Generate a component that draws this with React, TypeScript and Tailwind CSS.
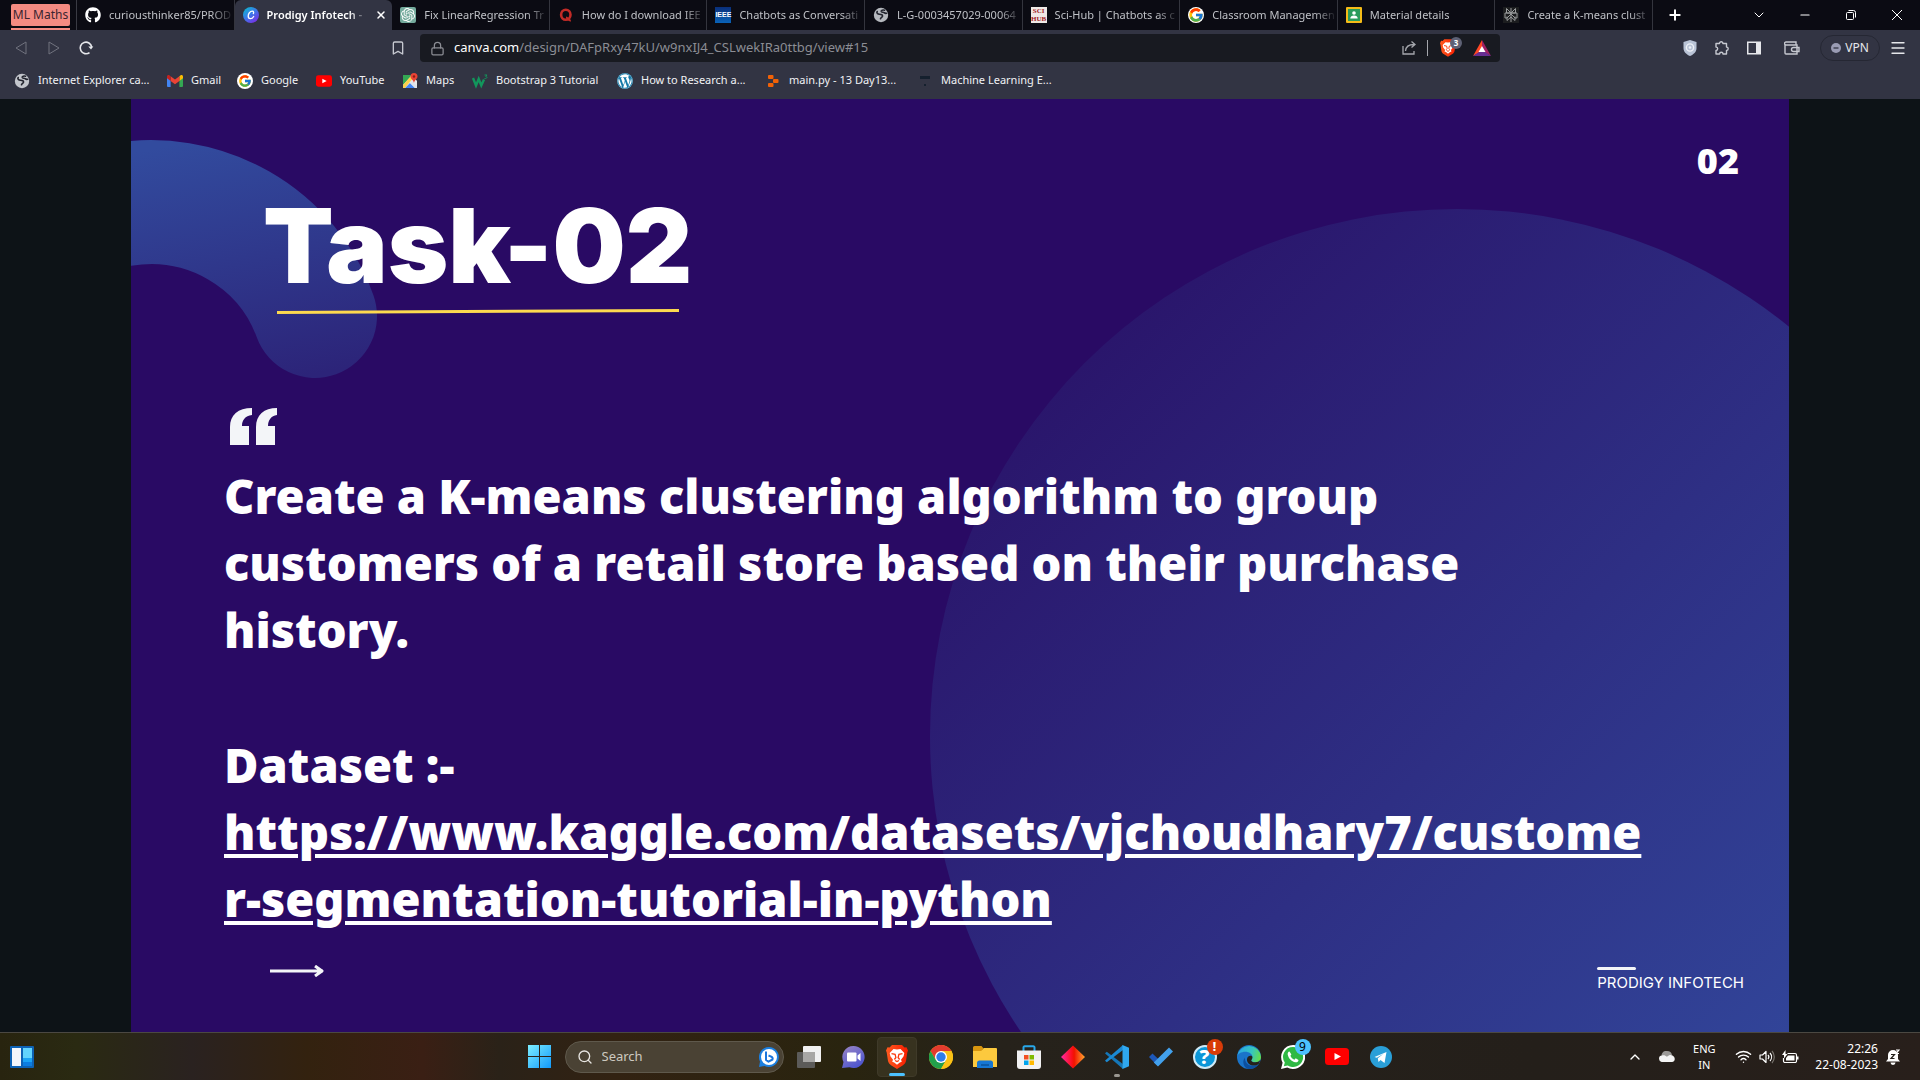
import React from "react";
import {
  Bookmark,
  ChevronDown,
  ChevronUp,
  Lock,
  Menu,
  Minus,
  Plus,
  Search,
  Wifi,
  X,
} from "lucide-react";
import { FaGithub, FaWordpress } from "react-icons/fa";
import { FcGoogle } from "react-icons/fc";
import { SiOpenai } from "react-icons/si";

/* ---------- favicons ---------- */

function CanvaIcon() {
  return (
    <svg viewBox="0 0 16 16" className="size-4">
      <defs>
        <linearGradient id="canva" x1="0" y1="0" x2="0.8" y2="1">
          <stop offset="0" stopColor="#05c3cc" />
          <stop offset="0.5" stopColor="#3a7be8" />
          <stop offset="1" stopColor="#7d2ae8" />
        </linearGradient>
      </defs>
      <circle cx="8" cy="8" r="8" fill="url(#canva)" />
      <path
        d="M10.3 6.6c.6-.8.5-2.5-1-2.5C7 4.1 5.2 6.8 5.2 9.1c0 1.6.9 2.6 2.2 2.6 1.4 0 2.6-1 3.3-2.2"
        fill="none"
        stroke="#fff"
        strokeWidth="1.3"
        strokeLinecap="round"
      />
    </svg>
  );
}

function OpenAiIcon() {
  return (
    <span className="flex size-4 items-center justify-center rounded-xs bg-[#74aa9c]">
      <SiOpenai className="size-[14px] text-white" />
    </span>
  );
}

function QuoraIcon() {
  return (
    <svg viewBox="0 0 16 16" className="size-4">
      <ellipse cx="7.8" cy="7.8" rx="4.7" ry="5" fill="none" stroke="#c22b27" strokeWidth="2.6" />
      <path d="M8 10.500c2 0 2.400 3.500 4.800 3" fill="none" stroke="#c22b27" strokeWidth="2" />
    </svg>
  );
}

function IeeeIcon() {
  return (
    <span className="flex size-4 items-center justify-center bg-linear-to-b from-[#0a2f7a] to-[#0a63b8] font-['Liberation_Sans',sans-serif] text-[7px] font-bold text-white">
      IEEE
    </span>
  );
}

function GlobeIcon({ color = "#b5b8be" }: { color?: string }) {
  return (
    <svg viewBox="0 0 16 16" className="size-4">
      <circle cx="8" cy="8" r="7.2" fill={color} />
      <path
        d="M4.200 4.500c-1 1.500.5 2.600 2.300 2.700 2 .1 3.300.6 3 2-.3 1.200-1.700 1.300-2 2.600M11.500 3.200C10 2.800 8 3.200 8.200 4.400c.2 1 2 .6 3 1.300.6.5 1.300.8 2.300.6"
        fill="none"
        stroke="#22242e"
        strokeWidth="1.6"
        strokeLinecap="round"
      />
    </svg>
  );
}

function SciHubIcon() {
  return (
    <span className="flex size-4 flex-col items-center justify-center bg-[#efe9e6] font-['Liberation_Serif',serif] text-[7px] leading-[8px] font-bold text-[#a3231f]">
      <span>SCI</span>
      <span>HUB</span>
    </span>
  );
}

function ClassroomIcon() {
  return (
    <svg viewBox="0 0 16 16" className="size-4">
      <rect width="16" height="16" rx="1" fill="#f5bb18" />
      <rect x="2" y="2" width="12" height="12" fill="#2a9b5b" />
      <circle cx="8" cy="6" r="1.8" fill="#fff" />
      <path d="M4.3 11.5c0-2 1.500-3 3.700-3s3.700 1 3.700 3z" fill="#fff" />
    </svg>
  );
}

function KnotIcon() {
  return (
    <svg viewBox="0 0 16 16" className="size-4">
      <rect width="16" height="16" fill="#1c1d1f" />
      <path
        d="M8 1v14M3.500 1.500 8 6l4.500-4.500V6h-9zM2 6h12v5h-2L8 7l-4 4H2zM4 9.500v4L8 10l4 3.500v-4"
        fill="none"
        stroke="#9a9c9d"
        strokeWidth="1"
      />
    </svg>
  );
}

function YouTubeIcon({ className }: { className: string }) {
  return (
    <svg viewBox="0 0 24 17" className={className}>
      <rect width="24" height="17" rx="3.5" fill="#f00" />
      <path d="M9.500 5v7l6.500-3.500z" fill="#fff" />
    </svg>
  );
}

function GmailIcon() {
  return (
    <svg viewBox="0 0 16 12" className="h-3 w-4">
      <path d="M0 1.500V11a1 1 0 0 0 1 1h2.600V5z" fill="#4285f4" />
      <path d="M16 1.500V11a1 1 0 0 1-1 1h-2.600V5z" fill="#34a853" />
      <path d="M12.400 1.200V6L16 3.300V1.600C16 .2 14.500-.4 13.400.4z" fill="#fbbc04" />
      <path d="M3.600 6V1.200L8 4.500l4.400-3.300V6L8 9.300z" fill="#ea4335" />
      <path d="M0 1.600v1.700L3.600 6V1.200l-1-.8C1.500-.4 0 .2 0 1.600z" fill="#c5221f" />
    </svg>
  );
}

function MapsIcon() {
  return (
    <svg viewBox="0 0 16 16" className="size-4">
      <path d="M1 2h9l5 6v7H1z" fill="#e8eaed" />
      <path d="M1 2h9L1 12z" fill="#34a853" />
      <path d="M3 15l5-5 5 5z" fill="#4285f4" />
      <path d="M1 15v-3l9-10 2 2L3 15z" fill="#fbd04b" />
      <path d="M8 10l2-2 5 5v2h-2z" fill="#dfe3ea" />
      <path d="M12 0a3.500 3.500 0 0 0-3.500 3.500C8.500 6 11.500 7 12 10c.5-3 3.500-4 3.500-6.500A3.500 3.500 0 0 0 12 0z" fill="#ea4335" />
      <circle cx="12" cy="3.5" r="1.2" fill="#8c1d14" />
    </svg>
  );
}

function W3Icon() {
  return (
    <svg viewBox="0 0 16 16" className="size-4">
      <path d="M1 5l3 7.500L6.700 6l2.600 6.500L12 6.500" fill="none" stroke="#12965c" strokeWidth="2.4" />
      <path d="M12.500 2h2.500l-1.300 1.500c1.800 0 1.800 2.300-1.200 2" fill="none" stroke="#12965c" strokeWidth="1" />
    </svg>
  );
}

function ReplitIcon() {
  return (
    <svg viewBox="0 0 16 16" className="size-4">
      <rect x="3" y="2" width="5.5" height="4" rx="1" fill="#f26207" />
      <rect x="8" y="6" width="5.5" height="4" rx="1" fill="#f26207" />
      <rect x="3" y="10" width="5.5" height="4" rx="1" fill="#f26207" />
    </svg>
  );
}

function DashIcon() {
  return (
    <svg viewBox="0 0 16 16" className="size-4">
      <rect x="3" y="3" width="10" height="3" fill="#15202e" />
      <rect x="7" y="11" width="2" height="2" fill="#15202e" />
    </svg>
  );
}

/* ---------- browser chrome ---------- */

type Tab = { title: string; icon: React.ReactNode; active?: boolean };

const tabs: Tab[] = [
  { title: "curiousthinker85/PROD", icon: <FaGithub className="size-4 text-white" /> },
  { title: "Prodigy Infotech -", icon: <CanvaIcon />, active: true },
  { title: "Fix LinearRegression Tr", icon: <OpenAiIcon /> },
  { title: "How do I download IEE", icon: <QuoraIcon /> },
  { title: "Chatbots as Conversati", icon: <IeeeIcon /> },
  { title: "L-G-0003457029-00064", icon: <GlobeIcon /> },
  { title: "Sci-Hub | Chatbots as c", icon: <SciHubIcon /> },
  { title: "Classroom Managemen", icon: <FcGoogle className="size-4 rounded-full bg-white" /> },
  { title: "Material details", icon: <ClassroomIcon /> },
  { title: "Create a K-means clust", icon: <KnotIcon /> },
];

function TabStrip() {
  return (
    <div className="flex h-[30px] items-stretch bg-[#0b0b13]">
      <div className="flex w-[77px] shrink-0 flex-col border-r border-[#3a3b44] pl-[11px]">
        <button className="mt-1 h-[22px] w-[59px] rounded-xs bg-[#f48b82] text-[12px] leading-[22px] text-[#3a2530]">
          ML Maths
        </button>
        <span className="mt-[2px] h-[2px] w-[59px] bg-[#f48b82]" />
      </div>
      <div className="grid w-[1576px] min-w-0 grid-cols-10">
        {tabs.map((t) => (
          <div
            key={t.title}
            className={
              t.active
                ? "flex min-w-0 items-center gap-2 rounded-t-md bg-[#323443] pr-[5px] pl-2 font-semibold text-white"
                : "flex min-w-0 items-center gap-2 border-r border-[#34353e] pl-2 text-[#bfc1c6]"
            }
          >
            <span className="shrink-0">{t.icon}</span>
            <span className="min-w-0 flex-1 overflow-hidden text-[11px] whitespace-nowrap [mask-image:linear-gradient(to_right,black_82%,transparent)]">
              {t.title}
            </span>
            {t.active && (
              <button aria-label="Close tab">
                <X className="size-3" strokeWidth={3} />
              </button>
            )}
          </div>
        ))}
      </div>
      <button aria-label="New tab" className="flex w-11 items-center justify-center text-white">
        <Plus className="size-4" strokeWidth={3} />
      </button>
      <div className="ml-auto flex text-white">
        <button aria-label="Search tabs" className="flex w-[46px] items-center justify-center">
          <ChevronDown className="size-4" strokeWidth={1.5} />
        </button>
        <button aria-label="Minimize" className="flex w-[46px] items-center justify-center">
          <Minus className="size-[14px]" strokeWidth={2} />
        </button>
        <button aria-label="Restore" className="flex w-[46px] items-center justify-center">
          <svg viewBox="0 0 10 10" className="size-[10px]" fill="none" stroke="currentColor">
            <rect x="0.5" y="2.5" width="7" height="7" rx="1" />
            <path d="M2.500.5h5a2 2 0 0 1 2 2v5" />
          </svg>
        </button>
        <button aria-label="Close" className="flex w-[46px] items-center justify-center">
          <svg viewBox="0 0 10 10" className="size-[10px]" fill="none" stroke="currentColor">
            <path d="M0 0l10 10M10 0L0 10" />
          </svg>
        </button>
      </div>
    </div>
  );
}

function BraveLion({ className }: { className: string }) {
  return (
    <svg viewBox="0 0 22 24" className={className}>
      <defs>
        <linearGradient id="brave" x1="0" x2="1">
          <stop offset="0" stopColor="#ff5a1f" />
          <stop offset="1" stopColor="#f61d00" />
        </linearGradient>
      </defs>
      <path d="M6 0h10l2.500 2.500 2-.3L22 5.500l-.7 2L20 16c-.5 2-1.500 3-3 4.200L11 24l-6-3.800C3.500 19 2.500 18 2 16L.7 7.500 0 5.500l1.500-3.300 2 .3z" fill="url(#brave)" />
      <path
        d="M7.500 4L11 4.600 14.500 4l3.800 4-.7 3.200-2.600 3.500.8 2-2 .7-2.800 2.400L8.200 17.400l-2-.7.8-2-2.600-3.500L3.700 8z"
        fill="#fff"
      />
      <path d="M5.500 8.700l3.600.6.8 3.200-1.500 2M16.500 8.700l-3.600.6-.8 3.200 1.500 2M9 15.500l2 1 2-1" fill="none" stroke="#fb3a0d" strokeWidth="1.3" />
    </svg>
  );
}

function NavBar() {
  return (
    <div className="flex h-9 items-center bg-[#323443] text-[#c6c8d0]">
      <div className="flex w-[420px] items-center">
        <button aria-label="Back" className="ml-[15px] text-[#70727e]">
          <svg viewBox="0 0 12 14" className="h-[14px] w-3" fill="none" stroke="currentColor">
            <path d="M11 1v12L1 7z" />
          </svg>
        </button>
        <button aria-label="Forward" className="ml-[21px] text-[#70727e]">
          <svg viewBox="0 0 12 14" className="h-[14px] w-3" fill="none" stroke="currentColor">
            <path d="M1 1v12l10-6z" />
          </svg>
        </button>
        <button aria-label="Reload" className="ml-[18px] text-[#e6e7eb]">
          <svg viewBox="0 0 16 16" className="size-4" fill="none" stroke="currentColor" strokeWidth="1.6">
            <path d="M11.500 12.600A5.800 5.800 0 1 1 13.700 7" />
            <path d="M10.300 6.500h5L13 9.500z" fill="currentColor" stroke="none" />
          </svg>
        </button>
        <button aria-label="Bookmark this page" className="mr-[14px] ml-auto">
          <Bookmark className="size-4" strokeWidth={2} />
        </button>
      </div>
      <div className="flex h-7 min-w-0 flex-1 items-center rounded-sm bg-[#181a21] pr-[9px] pl-[10px]">
        <Lock className="size-[15px] text-[#8b8d94]" strokeWidth={2} />
        <div className="ml-[9px] flex-1 overflow-hidden text-[13px] whitespace-nowrap text-[#8b8d94]">
          <span className="text-white">canva.com</span>/design/DAFpRxy47kU/w9nxIJ4_CSLwekIRa0ttbg/view#15
        </div>
        <button aria-label="Share">
          <svg viewBox="0 0 16 16" className="size-4" fill="none" stroke="#a5a7ad" strokeWidth="1.3">
            <path d="M2 6v8h11v-3" />
            <path d="M4.500 11c.3-4 3-6.500 8.500-6.500M10.500 1.500l3.500 3-3.500 3" />
          </svg>
        </button>
        <span className="mr-3 ml-[10px] h-4 w-px bg-[#a5a7ad]" />
        <button aria-label="Brave Shields" className="relative mr-[17px]">
          <BraveLion className="h-[18px] w-4" />
          <span className="absolute -top-[2px] -right-[6px] flex size-3 items-center justify-center rounded-full bg-[#5e6175] text-[8px] font-bold text-white">
            3
          </span>
        </button>
        <button aria-label="Brave Rewards">
          <svg viewBox="0 0 18 16" className="h-4 w-[18px]">
            <path d="M9 0L0 16l9-5z" fill="#ff4724" />
            <path d="M9 0l9 16-9-5z" fill="#9e1f63" />
            <path d="M0 16h18l-9-6z" fill="#662d91" />
            <path d="M9 6l-3.500 6h7z" fill="#fff" />
          </svg>
        </button>
      </div>
      <div className="flex w-[420px] items-center justify-end pr-[6px]">
        <button aria-label="Shield extension" className="flex w-8 justify-center">
          <svg viewBox="0 0 14 16" className="h-4 w-[14px]">
            <path d="M7 0l6.500 2v6c0 4-3 6.500-6.500 8C3.500 14.500.5 12 .5 8V2z" fill="#b9c3d6" />
            <circle cx="7" cy="7.5" r="3.6" fill="none" stroke="#eef1f7" strokeWidth="1.4" />
            <circle cx="7" cy="7.5" r="1.3" fill="#eef1f7" />
          </svg>
        </button>
        <button aria-label="Extensions" className="flex w-8 justify-center">
          <svg viewBox="0 0 16 16" className="size-4" fill="none" stroke="currentColor" strokeWidth="1.4">
            <path
              d="M2 3.500h3.500a1.700 1.700 0 1 1 3.400 0h3.600v3.600a1.700 1.700 0 1 1 0 3.400V14H9a1.700 1.700 0 0 0-3.400 0H2v-3.500a1.700 1.700 0 0 0 0-3.400z"
              strokeLinejoin="round"
            />
          </svg>
        </button>
        <button aria-label="Sidebar" className="flex w-8 justify-center">
          <svg viewBox="0 0 14 14" className="size-[14px] text-[#e6e7eb]">
            <rect x="0.75" y="1.25" width="12.5" height="11.5" fill="none" stroke="currentColor" strokeWidth="1.5" />
            <rect x="9" y="1" width="4.5" height="12" fill="currentColor" />
          </svg>
        </button>
        <button aria-label="Wallet" className="ml-[6px] flex w-8 justify-center">
          <svg viewBox="0 0 16 14" className="h-[14px] w-4" fill="none" stroke="currentColor" strokeWidth="1.4">
            <path d="M1 3v9a1 1 0 0 0 1 1h11V4H2a1 1 0 0 1 0-3h10v3" />
            <path d="M15 6.500H9.500a2 2 0 0 0 0 4H15z" />
          </svg>
        </button>
        <button className="ml-3 flex h-[26px] w-[60px] items-center justify-center gap-1 rounded-full border border-[#252733] text-[12px] text-[#e6e7eb]">
          <svg viewBox="0 0 10 10" className="size-[10px]">
            <circle cx="5" cy="5" r="5" fill="#9a9cb4" />
            <path d="M2.500 5h5" stroke="#323443" strokeWidth="1.3" />
          </svg>
          VPN
        </button>
        <button aria-label="Menu" className="ml-[2px] flex w-8 justify-center text-[#e6e7eb]">
          <Menu className="size-[18px]" strokeWidth={1.8} />
        </button>
      </div>
    </div>
  );
}

const bookmarks = [
  { label: "Internet Explorer ca...", icon: <GlobeIcon color="#c3c6cc" />, width: "w-[153px]" },
  { label: "Gmail", icon: <GmailIcon />, width: "w-[70px]" },
  { label: "Google", icon: <FcGoogle className="size-4 rounded-full bg-white p-px" />, width: "w-[79px]" },
  { label: "YouTube", icon: <YouTubeIcon className="h-3 w-4" />, width: "w-[86px]" },
  { label: "Maps", icon: <MapsIcon />, width: "w-[70px]" },
  { label: "Bootstrap 3 Tutorial", icon: <W3Icon />, width: "w-[145px]" },
  { label: "How to Research a...", icon: <FaWordpress className="size-4 rounded-full bg-[#1379a8] text-white" />, width: "w-[148px]" },
  { label: "main.py - 13 Day13...", icon: <ReplitIcon />, width: "w-[152px]" },
  { label: "Machine Learning E...", icon: <DashIcon />, width: "w-[152px]" },
];

function BookmarksBar() {
  return (
    <nav aria-label="Bookmarks" className="flex h-[33px] items-center bg-[#323443] pb-1 pl-[14px] text-[11px] text-[#f1f2f5]">
      {bookmarks.map((b) => (
        <a key={b.label} href="#" className={`flex shrink-0 items-center gap-2 whitespace-nowrap ${b.width}`}>
          <span className="shrink-0">{b.icon}</span>
          {b.label}
        </a>
      ))}
    </nav>
  );
}

/* ---------- slide ---------- */

function SlideBackdrop() {
  return (
    <svg
      viewBox="0 0 1658 933"
      preserveAspectRatio="xMidYMid slice"
      className="absolute inset-0 size-full"
      aria-hidden="true"
    >
      <defs>
        <linearGradient id="hook" gradientUnits="userSpaceOnUse" x1="60" y1="42" x2="110" y2="290">
          <stop offset="0" stopColor="#324b9e" />
          <stop offset="1" stopColor="#2c2479" />
        </linearGradient>
        <linearGradient id="disc" gradientUnits="userSpaceOnUse" x1="953" y1="264" x2="1699" y2="1010">
          <stop offset="0" stopColor="#2a166c" />
          <stop offset="1" stopColor="#32489c" />
        </linearGradient>
      </defs>
      <path
        d="M-154 276A174 171 0 0 1 184 217"
        fill="none"
        stroke="url(#hook)"
        strokeWidth="124"
        strokeLinecap="round"
      />
      <circle cx="1326" cy="637" r="527" fill="url(#disc)" />
    </svg>
  );
}

function Slide() {
  return (
    <section className="relative flex w-full max-w-[1658px] flex-col overflow-hidden bg-[#290a64] font-['Inter',sans-serif] text-white">
      <SlideBackdrop />
      <div className="relative flex flex-1 flex-col pt-[42px] pb-6">
        <div className="flex items-start justify-between pr-[50px] pl-[132px]">
          <h1 className="mt-[53px] text-[103px] leading-[103px] font-black">Task-02</h1>
          <span className="font-['Open_Sans',sans-serif] text-[36px] leading-[40px] font-extrabold">02</span>
        </div>
        <svg viewBox="0 0 402 6" className="mt-3 ml-[146px] h-[6px] w-[402px]" aria-hidden="true">
          <path d="M0 3.500L402 1.500" stroke="#fdd94f" strokeWidth="3" />
        </svg>
        <svg viewBox="0 0 48 37" className="mt-[93px] ml-[99px] h-[37px] w-12" fill="#f3f5f8" aria-hidden="true">
          <path d="M0 37V19C0 7 8 0 22 0V7C15 8 12 12 12 18H19V37Z" />
          <path d="M26 37V19C26 7 34 0 47 0V7C41 8 38 12 38 18H45V37Z" />
        </svg>
        <div className="mt-[18px] pr-10 pl-[93px] font-['Noto_Sans',sans-serif] text-[47px] leading-[67px] font-black">
          <p>
            Create a K-means clustering algorithm to group
            <br />
            customers of a retail store based on their purchase
            <br />
            history.
          </p>
          <p className="mt-[68px]">Dataset :-</p>
          <a
            href="https://www.kaggle.com/datasets/vjchoudhary7/customer-segmentation-tutorial-in-python"
            className="underline decoration-4 underline-offset-[4px]"
          >
            https://www.kaggle.com/datasets/vjchoudhary7/custome
            <br />
            r-segmentation-tutorial-in-python
          </a>
        </div>
        <div className="mt-8 flex items-start justify-between pr-[45px] pl-[139px]">
          <svg viewBox="0 0 56 12" className="h-3 w-14" fill="none" stroke="#f3f5f8" strokeWidth="3" aria-hidden="true">
            <path d="M0 6h53M45 1l7 5-7 5" strokeLinejoin="round" />
          </svg>
          <div className="pt-[2px]">
            <div className="h-[3px] w-[39px] rounded-full bg-[#f3f5f8]" />
            <p className="mt-[3px] text-[15px] leading-5">PRODIGY INFOTECH</p>
          </div>
        </div>
      </div>
    </section>
  );
}

/* ---------- taskbar ---------- */

function WidgetsIcon() {
  return (
    <svg viewBox="0 0 24 22" className="h-[22px] w-6">
      <rect width="24" height="22" rx="1" fill="#0d62b5" />
      <rect x="2" y="2" width="9" height="18" fill="#f3f6fa" />
      <rect x="13" y="2" width="9" height="10" fill="#62d4fd" />
      <rect x="13" y="12" width="9" height="4" fill="#1aa3f5" />
      <rect x="13" y="16" width="9" height="4" fill="#0c7de0" />
    </svg>
  );
}

function StartIcon() {
  return (
    <svg viewBox="0 0 23 23" className="size-[23px]">
      <defs>
        <linearGradient id="win" gradientUnits="userSpaceOnUse" x1="0" y1="0" x2="23" y2="23">
          <stop offset="0" stopColor="#7ceeff" />
          <stop offset="1" stopColor="#1299fb" />
        </linearGradient>
      </defs>
      <path d="M0 0h11v11H0zM12 0h11v11H12zM0 12h11v11H0zM12 12h11v11H12z" fill="url(#win)" />
    </svg>
  );
}

function BingIcon() {
  return (
    <svg viewBox="0 0 20 20" className="size-5">
      <path d="M10 0a10 10 0 1 1-4.500 19L0 20l1-5.500A10 10 0 0 1 10 0z" fill="#1b7fe0" />
      <circle cx="10" cy="10" r="8" fill="#fff" />
      <path d="M7 4.500v8.500l2.500 1.700 4-2.200c1-2-1-3-4-4" fill="none" stroke="#1b76dd" strokeWidth="2" strokeLinejoin="round" />
    </svg>
  );
}

function TaskViewIcon() {
  return (
    <svg viewBox="0 0 24 22" className="h-[22px] w-6">
      <rect x="6" width="18" height="16" rx="1" fill="#f1f1f1" />
      <rect y="6" width="18" height="16" rx="1" fill="#5c5b59" />
      <rect x="6" y="6" width="12" height="10" fill="#a8a7a5" />
    </svg>
  );
}

function ChatIcon() {
  return (
    <svg viewBox="0 0 24 24" className="size-6">
      <defs>
        <linearGradient id="chat" x1="0" y1="0" x2="0.6" y2="1">
          <stop offset="0" stopColor="#9a86c4" />
          <stop offset="1" stopColor="#4e55cf" />
        </linearGradient>
      </defs>
      <path d="M12.500 1a11 11 0 1 1-4 21.200L1 23l1.500-6A11 11 0 0 1 12.500 1z" fill="url(#chat)" />
      <rect x="6" y="7.5" width="9.5" height="9" rx="1" fill="#fff" />
      <path d="M16.500 10.500l3-2.500v8l-3-2.500z" fill="#fff" />
    </svg>
  );
}

function ChromeIcon() {
  return (
    <svg viewBox="0 0 24 24" className="size-6">
      <circle cx="12" cy="12" r="12" fill="#fbc116" />
      <path d="M12 6h10.400A12 12 0 0 0 1.600 6L6.800 15z" fill="#e33b2e" />
      <path d="M1.600 6a12 12 0 0 0 10.400 18l5.200-9L12 12l-5.200 3z" fill="#22a04b" />
      <path d="M12 24A12 12 0 0 0 22.400 6H12l5.200 9z" fill="#fbc116" />
      <circle cx="12" cy="12" r="6" fill="#fff" />
      <circle cx="12" cy="12" r="4.7" fill="#2f7deb" />
    </svg>
  );
}

function ExplorerIcon() {
  return (
    <svg viewBox="0 0 24 22" className="h-[22px] w-6">
      <path d="M0 1.500A1.500 1.500 0 0 1 1.500 0h7L11 3h-1L8 6H0z" fill="#d9960f" />
      <path d="M0 5h8l3-3h12a1 1 0 0 1 1 1v18H0z" fill="#fcc93e" />
      <path d="M4 22v-5a2.500 2.500 0 0 1 2.500-2.500h11A2.500 2.500 0 0 1 20 17v5z" fill="#1676d2" />
      <rect x="8" y="18" width="8" height="2" fill="#0d5ba8" />
    </svg>
  );
}

function StoreIcon() {
  return (
    <svg viewBox="0 0 24 24" className="size-6">
      <path d="M6.500 6V2.500A1.200 1.200 0 0 1 7.700 1.200h8.600a1.200 1.200 0 0 1 1.200 1.300V6" fill="none" stroke="#28a8ea" strokeWidth="2" />
      <path d="M0 5.500h24V21a3 3 0 0 1-3 3H3a3 3 0 0 1-3-3z" fill="#f1f1f2" />
      <rect x="7" y="10" width="4.5" height="4.5" fill="#f25022" />
      <rect x="12.5" y="10" width="4.5" height="4.5" fill="#7fba00" />
      <rect x="7" y="15.5" width="4.5" height="4.5" fill="#00a4ef" />
      <rect x="12.5" y="15.5" width="4.5" height="4.5" fill="#ffb900" />
    </svg>
  );
}

function DiamondIcon() {
  return (
    <svg viewBox="0 0 24 24" className="size-6">
      <defs>
        <linearGradient id="diamond" x1="0" x2="1">
          <stop offset="0" stopColor="#ff2aa5" />
          <stop offset="0.45" stopColor="#fb0f1c" />
          <stop offset="0.55" stopColor="#f01400" />
          <stop offset="1" stopColor="#ffa82f" />
        </linearGradient>
      </defs>
      <path d="M12 .5L24 12 12 23.500 0 12z" fill="url(#diamond)" />
    </svg>
  );
}

function VsCodeIcon() {
  return (
    <svg viewBox="0 0 24 24" className="size-6">
      <path d="M0 8.300l1.800-1.600 16 12.300L18 24 1 9.300z" fill="#1577b8" />
      <path d="M0 15.700l1.800 1.600L18 5V0L1 14.700z" fill="#1b8ad3" />
      <path d="M17.500 0L24 2.700v18.600L17.500 24z" fill="#2fa8f0" />
    </svg>
  );
}

function TodoIcon() {
  return (
    <svg viewBox="0 0 24 20" className="h-5 w-6">
      <path d="M0 10l3.500-3.500L12.500 15 8.700 19z" fill="#1d57b8" />
      <path d="M20 .5L24 4.500 9 19.500l-4.200-4z" fill="#43a1ec" />
    </svg>
  );
}

function HelpIcon() {
  return (
    <span className="flex size-6 items-center justify-center rounded-full border-2 border-[#cfeaf6] bg-[#0b96d8] text-[20px] leading-none font-extrabold text-white">
      ?
    </span>
  );
}

function EdgeIcon() {
  return (
    <svg viewBox="0 0 24 24" className="size-6">
      <defs>
        <linearGradient id="edgeTop" x1="0" x2="1" y1="0.3" y2="0.5">
          <stop offset="0" stopColor="#2aa6e6" />
          <stop offset="0.6" stopColor="#36c6c0" />
          <stop offset="1" stopColor="#63dd4e" />
        </linearGradient>
      </defs>
      <circle cx="12" cy="12" r="12" fill="#1a74c9" />
      <path d="M.2 11A12 12 0 0 1 24 12c0 3.500-2.500 5.300-5.500 5.300-2.800 0-4.300-1-4.300-1.800 0-.8 1.200-1.300 1.200-3.500C15.400 9 12 6.800 8.300 6.800 4 6.800 1 9 .2 11z" fill="url(#edgeTop)" />
      <path d="M8 12.500c-.5 5 3.500 8.500 7.500 8.500 2.500 0 4.500-.7 6.500-2.300A12 12 0 0 1 11 24C7 22.500 4.500 17 8 12.500z" fill="#0c4f9e" />
      <path d="M14.200 15.500c0 .8 1.500 1.800 4.300 1.800 2 0 3.600-.8 4.600-2.200-.3 1.700-.8 2.900-1.500 4-2 1.300-4 1.700-6 1.400-3.500-.5-6-3.500-5.600-6.500.3-2 2-3.200 3.500-3.200 1.200 0 1.900.6 1.900 1.400 0 2.100-1.200 2.500-1.200 3.300z" fill="#26221a" />
    </svg>
  );
}

function WhatsAppIcon() {
  return (
    <svg viewBox="0 0 24 24" className="size-6">
      <path d="M12 0a12 12 0 1 1-5.700 22.500L0 24l1.600-6.200A12 12 0 0 1 12 0z" fill="#fff" />
      <path d="M12 2a10 10 0 1 1-5.300 18.400L2.800 21.300l1-3.700A10 10 0 0 1 12 2z" fill="#2fb943" />
      <path d="M8.500 6.500c-1.300.2-2 1.500-1.800 2.900.7 3.700 3.700 7 7.800 7.900 1.500.2 3-.8 3-2.400l-2.800-1.600-1.300 1.400c-1.800-.6-3.300-2-4-3.900l1-1.200z" fill="#fff" />
    </svg>
  );
}

function TelegramIcon() {
  return (
    <svg viewBox="0 0 22 22" className="size-[22px]">
      <circle cx="11" cy="11" r="11" fill="#2a9fd8" />
      <path d="M4.500 11l12-5-2 11-4-3-2 2-.7-3.700 5.700-4.500-6.700 4z" fill="#fff" />
    </svg>
  );
}

type AppEntry = {
  name: string;
  icon: React.ReactNode;
  state?: "active" | "running";
  badge?: { text: string; tone: string };
};

const apps: AppEntry[] = [
  { name: "Task view", icon: <TaskViewIcon /> },
  { name: "Chat", icon: <ChatIcon /> },
  { name: "Brave", icon: <BraveLion className="h-6 w-[22px]" />, state: "active" },
  { name: "Chrome", icon: <ChromeIcon /> },
  { name: "File Explorer", icon: <ExplorerIcon /> },
  { name: "Microsoft Store", icon: <StoreIcon /> },
  { name: "Diamond", icon: <DiamondIcon /> },
  { name: "Visual Studio Code", icon: <VsCodeIcon />, state: "running" },
  { name: "To Do", icon: <TodoIcon /> },
  { name: "Get Help", icon: <HelpIcon />, badge: { text: "!", tone: "bg-[#d83b08] text-white font-extrabold" } },
  { name: "Edge", icon: <EdgeIcon /> },
  { name: "WhatsApp", icon: <WhatsAppIcon />, badge: { text: "9", tone: "bg-[#4cc2ff] text-black" } },
  { name: "YouTube", icon: <YouTubeIcon className="h-[17px] w-6" /> },
  { name: "Telegram", icon: <TelegramIcon /> },
];

function Taskbar() {
  return (
    <footer className="grid h-12 grid-cols-[1fr_auto_1fr] items-center border-t border-[#4b4842] bg-[linear-gradient(90deg,#28240f_0%,#2a2a12_4%,#2a2220_10%,#33220f_16%,#3a1f14_22%,#2a2218_26%,#322212_32%,#29240f_44%,#26221b_52%,#241f1a_80%,#281f1b_100%)] text-white">
      <button aria-label="Widgets" className="ml-[10px] w-6">
        <WidgetsIcon />
      </button>
      <div className="flex items-center">
        <button aria-label="Start" className="flex w-11 justify-center">
          <StartIcon />
        </button>
        <label className="mx-[3px] flex h-8 w-[219px] items-center rounded-full border border-[#5f594c] bg-[#4a4234] pr-1 pl-[11px]">
          <Search className="size-4 text-[#e8e6e2]" strokeWidth={2} />
          <input
            type="text"
            aria-label="Search"
            placeholder="Search"
            className="ml-[9px] min-w-0 flex-1 bg-transparent text-[13px] outline-none placeholder:text-[#cdc9c0]"
          />
          <BingIcon />
        </label>
        {apps.map((a) => (
          <button
            key={a.name}
            aria-label={a.name}
            className={
              a.state === "active"
                ? "relative mx-[2px] flex h-10 w-10 items-center justify-center rounded-sm border border-[#3f3a29] bg-[#37321f]"
                : "relative flex h-10 w-11 items-center justify-center"
            }
          >
            {a.icon}
            {a.state === "active" && (
              <span className="absolute bottom-0 left-1/2 h-[3px] w-4 -translate-x-1/2 rounded-full bg-[#4cc2ff]" />
            )}
            {a.state === "running" && (
              <span className="absolute bottom-0 left-1/2 h-[3px] w-[6px] -translate-x-1/2 rounded-full bg-[#9a9790]" />
            )}
            {a.badge && (
              <span
                className={`absolute top-[2px] right-[4px] flex size-4 items-center justify-center rounded-full text-[12px] leading-none ${a.badge.tone}`}
              >
                {a.badge.text}
              </span>
            )}
          </button>
        ))}
      </div>
      <div className="flex items-center justify-end pr-5 text-[12px] leading-4">
        <button aria-label="Show hidden icons" className="mr-4">
          <ChevronUp className="size-4" strokeWidth={2} />
        </button>
        <button aria-label="OneDrive" className="mr-[17px]">
          <svg viewBox="0 0 16 11" className="h-[11px] w-4">
            <path d="M3 6.500A4.600 4.600 0 0 1 8 0c3 0 4.500 1.500 5 4L9 8z" fill="#9c9a98" />
            <path d="M3.500 11A3.200 3.200 0 0 1 3 4.600c2-.8 3.500 0 5 1.200C10 3.600 12 3.500 13.500 4.500c3.300 1.500 2.800 6.500-.5 6.500z" fill="#f4f4f4" />
          </svg>
        </button>
        <button className="mr-[19px] w-6 text-center text-[11px]">
          ENG
          <br />
          IN
        </button>
        <button aria-label="Network, volume and battery" className="mr-4 flex items-center gap-[7px]">
          <Wifi className="size-[17px]" strokeWidth={2} />
          <svg viewBox="0 0 16 14" className="h-[14px] w-4" fill="none" stroke="currentColor" strokeWidth="1.2">
            <path d="M1 5h2.500L7 1.500v11L3.500 9H1z" strokeLinejoin="round" />
            <path d="M9 5a3 3 0 0 1 0 4M11 3a6 6 0 0 1 0 8" />
            <path d="M13 1a9 9 0 0 1 0 12" stroke="#77736d" />
          </svg>
          <svg viewBox="0 0 17 14" className="h-[14px] w-[17px]">
            <path d="M5.500 3.500H13a1.500 1.500 0 0 1 1.500 1.500v6a1.500 1.500 0 0 1-1.500 1.500H3A1.500 1.500 0 0 1 1.500 11V8" fill="none" stroke="#fff" strokeWidth="1.2" />
            <path d="M4 8l2-2.500h6.500v5H4zM15 6.500h1.500v3H15zM3.500 0L0 5h2v3.500L5.500 4h-2z" fill="#fff" />
          </svg>
        </button>
        <button className="mr-2 text-right">
          22:26
          <br />
          22-08-2023
        </button>
        <button aria-label="Notifications">
          <svg viewBox="0 0 14 16" className="h-4 w-[14px]">
            <path d="M7 1a5 5 0 0 0-5 5v4L0 12.500h14L12 10V6a5 5 0 0 0-5-5zM4.500 13.500a2.500 2.500 0 0 0 5 0z" fill="#fff" />
            <path d="M5 5.500h3.500L5 9.500h3.500" fill="none" stroke="#241f1a" strokeWidth="1.2" />
            <path d="M10 1h3l-3 3.500h3" fill="none" stroke="#fff" strokeWidth="1.2" />
          </svg>
        </button>
      </div>
    </footer>
  );
}

export default function App() {
  return (
    <div className="flex min-h-screen flex-col bg-[#0d1317] font-['Noto_Sans',sans-serif]">
      <header>
        <TabStrip />
        <NavBar />
        <BookmarksBar />
      </header>
      <main className="flex flex-1 justify-center">
        <Slide />
      </main>
      <Taskbar />
    </div>
  );
}
